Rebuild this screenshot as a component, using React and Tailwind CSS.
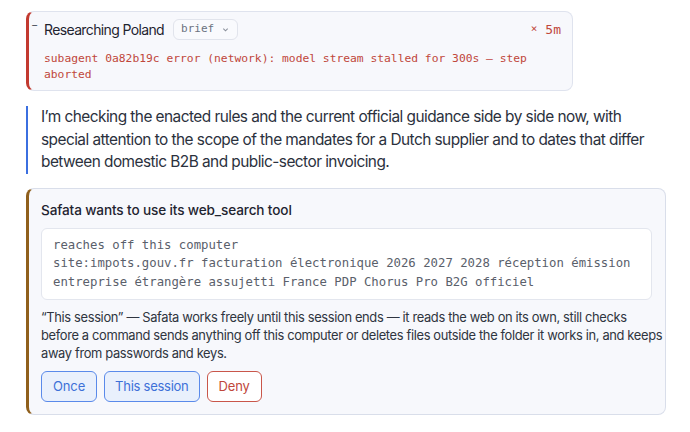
import React from "react";

const sans = { fontFamily: "Inter, 'Noto Sans', sans-serif" };

function ErrorStep() {
  return (
    <div className="w-[547px] rounded-lg border border-[#dfe3ee] border-l-[3px] border-l-[#c2392f] bg-[#f7f8fc] pl-[2px] pr-[11px] pt-[7px] pb-[7px]">
      <div className="flex items-center">
        <span className="w-[13px] self-start text-[11px] leading-[12px] text-[#555b66]">−</span>
        <span className="text-[14px] tracking-[-0.045em] text-[#1f2430]">Researching Poland</span>
        <span className="ml-[9px] flex h-[21px] items-center gap-[8px] rounded-md border border-[#e1e4ec] bg-[#f9fafd] pl-[7px] pr-[8px] font-['DejaVu_Sans_Mono',monospace] text-[11px] text-[#6b7280]">
          brief
          <svg width="7" height="7" viewBox="0 0 8 8" fill="none" stroke="#8a909b" strokeWidth="1.2">
            <path d="M1.5 3 L4 5.5 L6.5 3" />
          </svg>
        </span>
        <span className="ml-auto flex items-center gap-[8px] font-['DejaVu_Sans_Mono',monospace] text-[13px] text-[#c0473b]">
          <span className="text-[11px]">×</span>
          <span>5m</span>
        </span>
      </div>
      <p className="mt-[11px] pl-[13px] font-['DejaVu_Sans_Mono',monospace] text-[11.3px] leading-[16px] text-[#c0473b]">
        subagent 0a82b19c error (network): model stream stalled for 300s — step aborted
      </p>
    </div>
  );
}

function Narration() {
  return (
    <div className="mt-[15px] border-l-2 border-[#3b6fe0] pl-[13px] pr-[10px]">
      <p className="text-[15.4px] leading-[22.5px] tracking-[-0.035em] text-[#2b313d]">
        I’m checking the enacted rules and the current official guidance side by side now, with special attention to the scope of the mandates for a Dutch supplier and to dates that differ between domestic B2B and public-sector invoicing.
      </p>
    </div>
  );
}

function PermissionCard() {
  return (
    <div className="mt-[14px] rounded-lg border border-[#d9deea] border-l-[3px] border-l-[#8f5f1c] bg-[#f7f8fc] pl-[12px] pr-[2px] pt-[12px] pb-[12px]">
      <h3 className="text-[13.6px] font-medium leading-[18px] tracking-[-0.01em] text-[#1f2430]">
        Safata wants to use its web_search tool
      </h3>
      <div className="mt-[9px] mr-[11px] rounded-md border border-[#e3e6ee] bg-white pl-[11px] pr-[10px] pt-[7px] pb-[8px] font-['DejaVu_Sans_Mono',monospace] text-[12.3px] leading-[18.5px] text-[#5a606b]">
        <div>reaches off this computer</div>
        <div>
          site:impots.gouv.fr facturation électronique 2026 2027 2028 réception émission entreprise étrangère assujetti France PDP Chorus Pro B2G officiel
        </div>
      </div>
      <p className="mt-[9px] text-[12.9px] leading-[18px] tracking-[-0.027em] text-[#2f3540]">
        “This session” — Safata works freely until this session ends — it reads the web on its own, still checks before a command sends anything off this computer or deletes files outside the folder it works in, and keeps away from passwords and keys.
      </p>
      <div className="mt-[8px] flex gap-[7px]">
        <button className="h-[31px] rounded-md border border-[#5a8aea] bg-[#e9f0fc] px-[11px] text-[13px] tracking-[-0.01em] text-[#3d70d8]">
          Once
        </button>
        <button className="h-[31px] rounded-md border border-[#5a8aea] bg-[#e9f0fc] px-[10px] text-[13px] tracking-[-0.02em] text-[#3d70d8]">
          This session
        </button>
        <button className="h-[31px] rounded-md border border-[#c9564a] bg-white px-[11px] text-[13px] tracking-[-0.01em] text-[#c0473b]">
          Deny
        </button>
      </div>
    </div>
  );
}

export default function App() {
  return (
    <div className="min-h-[432px] w-[690px] bg-white pl-[26px] pr-[24px] pt-[11px]" style={sans}>
      <ErrorStep />
      <Narration />
      <PermissionCard />
    </div>
  );
}
